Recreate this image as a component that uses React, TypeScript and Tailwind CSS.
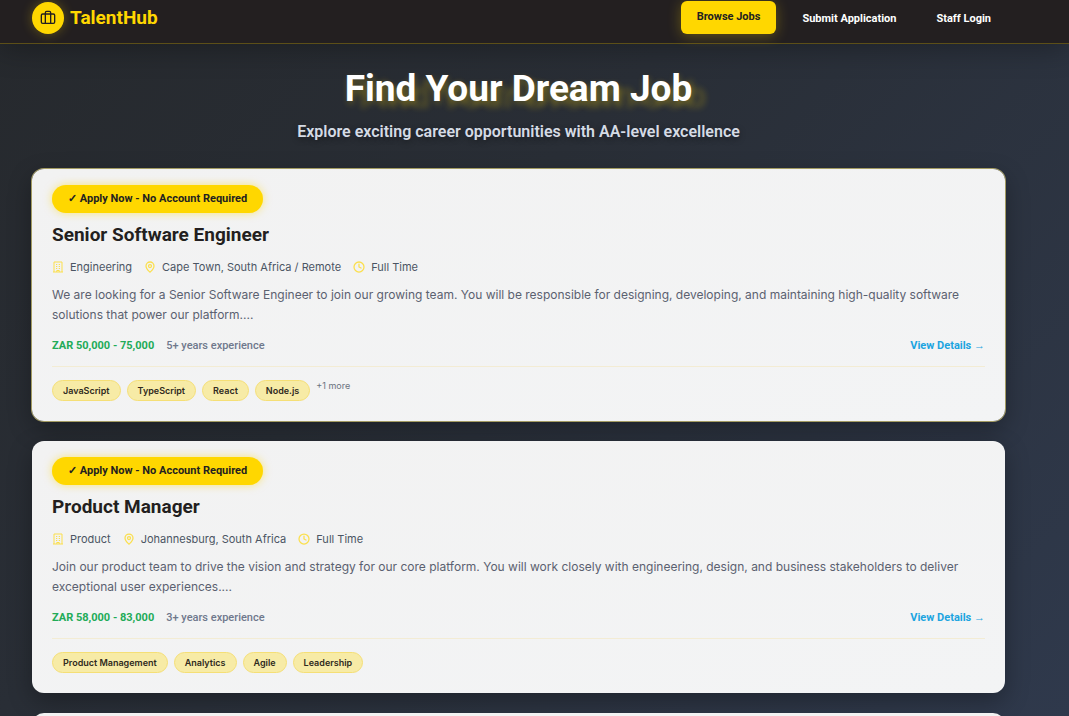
import { Briefcase, Clock, MapPin } from 'lucide-react';

type Job = {
  title: string;
  department: string;
  location: string;
  type: string;
  description: string;
  salary: string;
  experience: string;
  skills: string[];
  more?: number;
  highlighted?: boolean;
};

const jobs: Job[] = [
  {
    title: 'Senior Software Engineer',
    department: 'Engineering',
    location: 'Cape Town, South Africa / Remote',
    type: 'Full Time',
    description:
      'We are looking for a Senior Software Engineer to join our growing team. You will be responsible for designing, developing, and maintaining high-quality software solutions that power our platform....',
    salary: 'ZAR 50,000 - 75,000',
    experience: '5+ years experience',
    skills: ['JavaScript', 'TypeScript', 'React', 'Node.js'],
    more: 1,
    highlighted: true,
  },
  {
    title: 'Product Manager',
    department: 'Product',
    location: 'Johannesburg, South Africa',
    type: 'Full Time',
    description:
      'Join our product team to drive the vision and strategy for our core platform. You will work closely with engineering, design, and business stakeholders to deliver exceptional user experiences....',
    salary: 'ZAR 58,000 - 83,000',
    experience: '3+ years experience',
    skills: ['Product Management', 'Analytics', 'Agile', 'Leadership'],
  },
];

const cardBase =
  'rounded-xl bg-gradient-to-br from-[#f2f2f2] to-[#f3f4f5] px-5 pt-4 pb-5 shadow-[0_8px_24px_rgba(0,0,0,0.3)]';

function OfficeIcon() {
  return (
    <svg viewBox="0 0 24 24" fill="none" stroke="currentColor" strokeWidth="2" className="size-3 text-[#fbdf4d]" aria-hidden="true">
      <path d="M2 22h20M4 22V2h16v20M8 7h2.500M13.500 7H16M8 11h2.500M13.500 11H16M8 15h2.500M13.500 15H16M9.500 22v-3h5v3" />
    </svg>
  );
}

function JobCard({ job }: { job: Job }) {
  return (
    <article className={job.highlighted ? `${cardBase} ring-1 ring-[#a39b62]` : cardBase}>
      <span className="flex h-7 w-fit items-center rounded-full bg-[#ffd700] px-4 text-[11px] font-bold text-[#231f20] shadow-[0_0_8px_rgba(255,215,0,0.5)]">
        ✓ Apply Now - No Account Required
      </span>
      <h2 className="mt-2 text-[19px] leading-7 font-bold text-[#231f20]">{job.title}</h2>
      <ul className="mt-2.5 flex flex-wrap gap-x-3 font-['Inter','Liberation_Sans',sans-serif] text-[11px] leading-4 text-[#4b5563]">
        <li className="flex items-center gap-1.5">
          <OfficeIcon />
          {job.department}
        </li>
        <li className="flex items-center gap-1.5">
          <MapPin strokeWidth={2.5} className="size-3 text-[#fbdf4d]" />
          {job.location}
        </li>
        <li className="flex items-center gap-1.5">
          <Clock strokeWidth={2.5} className="size-3 text-[#fbdf4d]" />
          {job.type}
        </li>
      </ul>
      <p className="mt-2.5 font-['Inter','Liberation_Sans',sans-serif] text-[12px] leading-5 text-[#5b6170]">
        {job.description}
      </p>
      <div className="mt-[13px] flex items-center gap-3 text-[11px] leading-4">
        <span className="font-bold text-[#22ab58]">{job.salary}</span>
        <span className="font-medium text-[#6f788c]">{job.experience}</span>
        <a href="#details" className="ml-auto font-bold text-[#1ca4e0]">
          View Details →
        </a>
      </div>
      <ul className="mt-3 flex gap-1.5 border-t border-[#f3ecd4] pt-[13px] font-['Inter','Liberation_Sans',sans-serif]">
        {job.skills.map((skill) => (
          <li
            key={skill}
            className="flex h-[21px] items-center rounded-full border border-[#f5df76] bg-[#f7eba6] px-2.5 text-[9px] font-semibold text-[#2f2a20]"
          >
            {skill}
          </li>
        ))}
        {job.more && <li className="text-[9px] leading-3 text-[#6b7280]">+{job.more} more</li>}
      </ul>
    </article>
  );
}

export default function App() {
  return (
    <div className="h-screen overflow-hidden bg-[linear-gradient(135deg,#26292d_0%,#292e36_40%,#2f394c_100%)] font-['Roboto','Liberation_Sans',sans-serif]">
      <header className="border-b border-[#5c4f18] bg-[#231f20] shadow-[0_4px_30px_rgba(0,0,0,0.3)]">
        <div className="flex h-[43px] items-start justify-between pr-16 pl-8">
          <a href="#home" className="flex items-center gap-1.5 pt-0.5 text-[19px] font-bold text-[#ffd700]">
            <span className="flex size-8 items-center justify-center rounded-full bg-[#ffd700] text-[#231f20] shadow-[0_0_12px_rgba(255,215,0,0.3)]">
              <Briefcase className="size-4" />
            </span>
            TalentHub
          </a>
          <nav className="flex gap-3 pt-px text-[11px] font-bold text-white">
            <a
              href="#jobs"
              className="flex h-[33px] items-center rounded-md bg-[#ffd700] px-4 text-[#231f20] shadow-[0_2px_14px_rgba(255,215,0,0.3)]"
            >
              Browse Jobs
            </a>
            <a href="#apply" className="flex h-9 items-center px-3.5">
              Submit Application
            </a>
            <a href="#login" className="flex h-9 items-center px-3.5">
              Staff Login
            </a>
          </nav>
        </div>
      </header>
      <main className="pr-16 pl-8">
        <div className="pt-6 text-center">
          <h1 className="text-[37px] leading-[42px] font-bold text-white [text-shadow:1px_3px_6px_rgba(255,215,0,0.25),14px_7px_6px_rgba(255,215,0,0.2)]">
            Find Your Dream Job
          </h1>
          <p className="mt-2.5 text-base leading-6 font-semibold text-[#d5dbe5] [text-shadow:0_2px_6px_rgba(0,0,0,0.4)]">
            Explore exciting career opportunities with AA-level excellence
          </p>
        </div>
        <div className="mt-[25px] grid gap-5">
          {jobs.map((job) => (
            <JobCard key={job.title} job={job} />
          ))}
          <div className="h-64 rounded-xl bg-[#f2f2f2]" />
        </div>
      </main>
    </div>
  );
}
